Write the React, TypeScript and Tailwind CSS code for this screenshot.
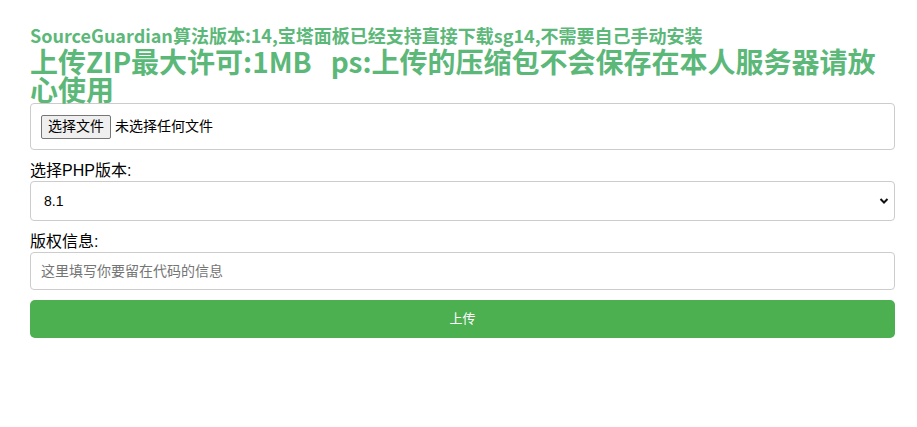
import React from "react";

export default function App() {
  const cjk = { fontFamily: '"Noto Sans CJK SC", "Noto Sans", sans-serif' };
  const ui = { fontFamily: '"Liberation Sans", "Noto Sans CJK SC", sans-serif' };
  return (
    <div className="w-[917px] h-[427px] bg-white overflow-hidden">
      <div className="ml-[30px] w-[865px] pt-[24px]">
        <div style={cjk} className="text-[18px] leading-[22px] font-bold text-[#5cb879] whitespace-nowrap">
          SourceGuardian算法版本:14,宝塔面板已经支持直接下载sg14,不需要自己手动安装
        </div>
        <div style={cjk} className="mt-[1px] text-[28px] leading-[28px] font-bold text-[#5cb879]">
          上传ZIP最大许可:1MB&nbsp;&nbsp;&nbsp;ps:上传的压缩包不会保存在本人服务器请放心使用
        </div>
        <div className="h-[47px] border border-[#cccccc] rounded-[4px] flex items-center px-[10px]" style={ui}>
          <span className="h-[24px] flex items-center px-[6px] bg-[#efefef] border border-[#767676] rounded-[2px] text-[14px] text-black">
            选择文件
          </span>
          <span className="ml-[4px] text-[14px] text-black">未选择任何文件</span>
        </div>
        <div style={ui} className="mt-[10px] text-[16px] leading-[21px] text-black">选择PHP版本:</div>
        <div className="relative h-[40px] border border-[#cccccc] rounded-[4px] flex items-center pl-[13px]" style={ui}>
          <span className="text-[14px] text-black">8.1</span>
          <svg className="absolute right-[5px] top-[14px]" width="10" height="10" viewBox="0 0 10 10">
            <path d="M1.5 3 L5 6.5 L8.5 3" fill="none" stroke="#111" strokeWidth="2" />
          </svg>
        </div>
        <div style={ui} className="mt-[10px] text-[16px] leading-[21px] text-black">版权信息:</div>
        <div className="h-[38px] border border-[#cccccc] rounded-[4px] flex items-center pl-[10px]" style={ui}>
          <span className="text-[14px] text-[#757575]">这里填写你要留在代码的信息</span>
        </div>
        <div className="mt-[10px] h-[38px] bg-[#4caf50] rounded-[5px] flex items-center justify-center" style={ui}>
          <span className="text-[13px] text-white">上传</span>
        </div>
      </div>
    </div>
  );
}
